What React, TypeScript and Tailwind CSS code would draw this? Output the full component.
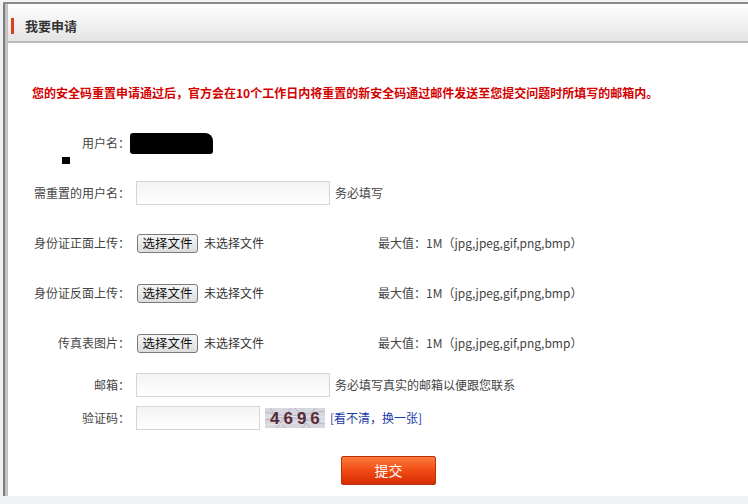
import React from "react";

const font = { fontFamily: '"Microsoft YaHei", "Noto Sans CJK SC", "Noto Sans", sans-serif' };

function Label({ text }: { text: string }) {
  return <div className="w-[130px] shrink-0 text-right text-[12px] text-[#444]">{text}</div>;
}

function TextInput({ w }: { w: string }) {
  return (
    <div
      className={`${w} h-[24px] ml-[6px] border border-[#d6d6d6] bg-gradient-to-b from-[#f3f3f3] to-white`}
    />
  );
}

function FileRow({ label }: { label: string }) {
  return (
    <div className="flex items-center h-[24px]">
      <Label text={label} />
      <div className="ml-[7px] w-[61px] h-[19px] flex items-center justify-center rounded-[3px] border border-[#7a7a7a] bg-gradient-to-b from-[#f6f6f6] to-[#dcdcdc] text-[12.5px] text-[#111] leading-none">
        选择文件
      </div>
      <span className="ml-[6px] w-[174px] text-[12px] text-[#333]">未选择文件</span>
      <span className="text-[12px] text-[#444]">最大值：1M（jpg,jpeg,gif,png,bmp）</span>
    </div>
  );
}

function Captcha() {
  return (
    <svg width="60" height="20" viewBox="0 0 60 20" className="ml-[5px]">
      <rect width="60" height="20" fill="#d6d6de" />
      <path d="M0 4 L60 16 M0 12 L60 3 M5 0 L20 20 M30 0 L45 20 M50 0 L38 20 M12 20 L26 0" stroke="#b8b8c4" strokeWidth="1" />
      <path d="M0 8 L60 9 M0 17 L60 13" stroke="#e6e6ec" strokeWidth="1" />
      <text x="5" y="16" fontSize="17" fontWeight="700" fill="#5a2a3a" fontFamily="Liberation Sans, sans-serif" letterSpacing="4">
        4696
      </text>
    </svg>
  );
}

export default function App() {
  return (
    <div className="w-[748px] h-[504px] bg-[#eef2f5] overflow-hidden" style={font}>
      <div className="h-[2px] bg-[#f4f4f4]" />
      <div className="h-[494px] ml-[3px] flex border-t-2 border-[#8a8a8a]">
        <div className="w-[2px] bg-[#7d7d7d]" />
        <div className="w-[3px] bg-[#c4c4c4]" />
        <div className="flex-1 bg-white flex flex-col">
          <div className="mt-[4px] h-[35px] border-b-2 border-[#bdbdbd] bg-gradient-to-b from-[#fcfcfc] to-[#e4e4e4] flex items-center pt-[3px]">
            <div className="ml-[3px] w-[3px] h-[16px] bg-[#d9401a]" />
            <span className="ml-[11px] text-[13px] font-bold text-[#333]">我要申请</span>
          </div>

          <div className="flex flex-col -ml-[8px]">
            <div className="mt-[40px] h-[20px] pl-[32px] text-[12px] font-bold text-[#d40000] leading-[20px]">
              您的安全码重置申请通过后，官方会在10个工作日内将重置的新安全码通过邮件发送至您提交问题时所填写的邮箱内。
            </div>

            <div className="mt-[28px] flex items-center h-[24px]">
              <Label text="用户名：" />
              <div className="w-[83px] h-[21px] bg-black rounded-[3px] rounded-tr-[8px]" />
            </div>
            <div className="mt-[2px] ml-[62px] w-[8px] h-[7px] bg-black" />

            <div className="mt-[17px] flex items-center h-[24px]">
              <Label text="需重置的用户名：" />
              <TextInput w="w-[194px]" />
              <span className="ml-[5px] text-[12px] text-[#444]">务必填写</span>
            </div>

            <div className="mt-[26px] flex flex-col gap-[26px]">
              <FileRow label="身份证正面上传：" />
              <FileRow label="身份证反面上传：" />
              <FileRow label="传真表图片：" />
            </div>

            <div className="mt-[18px] flex items-center h-[24px]">
              <Label text="邮箱：" />
              <TextInput w="w-[194px]" />
              <span className="ml-[5px] text-[12px] text-[#444]">务必填写真实的邮箱以便跟您联系</span>
            </div>

            <div className="mt-[9px] flex items-center h-[24px]">
              <Label text="验证码：" />
              <TextInput w="w-[124px]" />
              <Captcha />
              <span className="ml-[5px] text-[12px] text-[#1a3aa8]">[看不清，换一张]</span>
            </div>

            <div className="mt-[26px] pl-[341px]">
              <button className="w-[95px] h-[29px] rounded-[2px] border border-[#b8300c] bg-gradient-to-b from-[#fb7a3a] via-[#f04a14] to-[#d82c04] text-[14px] text-white">
                提交
              </button>
            </div>
          </div>
        </div>
      </div>
    </div>
  );
}
